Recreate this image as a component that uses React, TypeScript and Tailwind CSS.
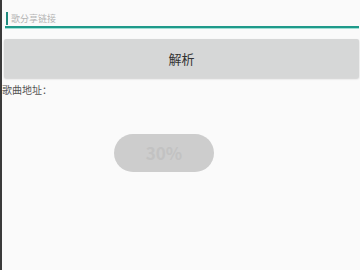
export default function App() {
  return (
    <div
      className="w-[360px] h-[270px] bg-[#fafafa] border-l-2 border-[#3a3a3a] overflow-hidden relative"
      style={{ fontFamily: '"Noto Sans CJK SC", "Noto Sans", sans-serif' }}
    >
      <div className="pl-[3px] pr-[1px] pt-[10px]">
        <div className="flex items-center h-[16px] border-b-[2px] border-[#1f9a8a] shadow-[0_1px_0_#9fe0d6] box-content">
          <div className="w-[2px] h-[13px] bg-[#1f8a7d] ml-[1px]" />
          <span className="ml-[3px] text-[9px] leading-none text-[#b4b4b4]">歌分享链接</span>
        </div>
      </div>
      <div className="pl-[2px] pr-[1px] mt-[11px]">
        <div className="h-[39px] rounded-[2px] bg-[#d6d7d7] shadow-[0_1px_2px_rgba(0,0,0,0.18)] flex items-center justify-center text-[13px] text-[#333]">
          解析
        </div>
      </div>
      <div className="mt-[6px] text-[10px] leading-[12px] text-[#555]">歌曲地址：</div>
      <div className="mt-[38px] ml-[112px] w-[100px] h-[38px] rounded-full bg-[#cdcdcd] flex items-center justify-center text-[17px] font-bold text-[#c2c2c2]">
        30%
      </div>
    </div>
  );
}
